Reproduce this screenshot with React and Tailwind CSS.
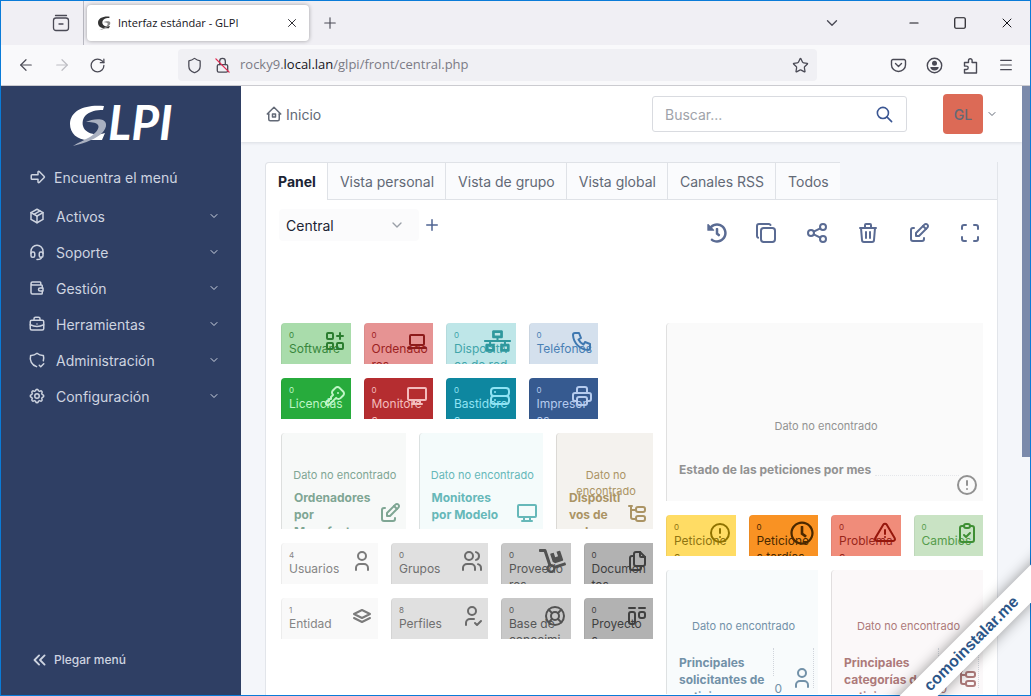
import React, { useState } from "react";
import clsx from "clsx";
import { ArrowLeft, ArrowRight, ChevronDown, Menu, Minus, Plus, RotateCw, Shield, Square, Star, X } from "lucide-react";
import {
  TbAlertCircle,
  TbAlertTriangle,
  TbApps,
  TbArrowBigRight,
  TbBriefcase,
  TbChevronDown,
  TbChevronsLeft,
  TbClipboardCheck,
  TbCopy,
  TbDeviceDesktop,
  TbDeviceLaptop,
  TbEdit,
  TbFiles,
  TbHeadset,
  TbHome2,
  TbKey,
  TbLayoutKanban,
  TbLifebuoy,
  TbMaximize,
  TbPackage,
  TbPhone,
  TbPlus,
  TbPrinter,
  TbSearch,
  TbServer,
  TbSettings,
  TbShare,
  TbShieldCheck,
  TbStack,
  TbTrash,
  TbUser,
  TbUserCheck,
  TbUsers,
  TbWallet,
} from "react-icons/tb";
import { FaDolly, FaHistory, FaNetworkWired, FaRegClock } from "react-icons/fa";

const TreeIcon = ({ className }) => (
  <svg viewBox="0 0 24 24" className={className} fill="none" stroke="currentColor" strokeWidth="2" strokeLinecap="round" strokeLinejoin="round">
    <path d="M4 5h3M6 5v11a2 2 0 0 0 2 2h3M6 9h5" />
    <rect x="11" y="6" width="9" height="5" rx="2" />
    <rect x="11" y="15" width="9" height="5" rx="2" />
  </svg>
);

const Swoosh = ({ dark }) => (
  <>
    <path
      d="M35 2C17 0 1 6 1 20c0 9 7 16 18 16h14l3-7c-8 3-20 1-22-7C12 12 20 6 34 6z"
      fill={dark ? "#333" : "#fff"}
    />
    <path
      d="M17 18c6-3 19-5 20 2 1 6-7 13-15 16-6 3-12 4-18 6 6-4 12-6 17-9 6-4 10-9 8-12-2-3-8-3-12-3z"
      fill={dark ? "#888" : "#a9b0c0"}
    />
  </>
);

const Logo = () => (
  <svg viewBox="0 0 104 44" className="h-11 w-[104px] overflow-visible" role="img" aria-label="GLPI">
    <Swoosh />
    <text x="39" y="36" fontFamily="Lato" fontSize="48" fontWeight="700" fontStyle="italic" fill="#fff">
      LPI
    </text>
  </svg>
);

const menu = [
  { label: "Activos", icon: TbPackage },
  { label: "Soporte", icon: TbHeadset },
  { label: "Gestión", icon: TbWallet },
  { label: "Herramientas", icon: TbBriefcase },
  { label: "Administración", icon: TbShieldCheck },
  { label: "Configuración", icon: TbSettings },
];

const tabs = ["Panel", "Vista personal", "Vista de grupo", "Vista global", "Canales RSS", "Todos"];

const actions = [
  { label: "Historial", icon: FaHistory, size: "size-5" },
  { label: "Clonar", icon: TbCopy, size: "size-6" },
  { label: "Compartir", icon: TbShare, size: "size-6" },
  { label: "Eliminar", icon: TbTrash, size: "size-6" },
  { label: "Editar", icon: TbEdit, size: "size-6" },
  { label: "Pantalla completa", icon: TbMaximize, size: "size-6" },
];

const counters = [
  { label: "Software", n: 0, icon: TbApps, at: "col-start-1 col-span-3 row-start-1", color: "bg-[#a9dcab] text-[#38873c]", iconColor: "text-[#2b7d30]" },
  { label: "Ordenado\nres", n: 0, icon: TbDeviceLaptop, at: "col-start-4 col-span-3 row-start-1", color: "bg-[#e69393] text-[#9c2222]", iconColor: "text-[#8c1a1a]" },
  { label: "Dispositiv\nos de red", n: 0, icon: FaNetworkWired, wide: true, at: "col-start-7 col-span-3 row-start-1", color: "bg-[#bee6e8] text-[#41a5aa]", iconColor: "text-[#2f989d]" },
  { label: "Teléfonos", n: 0, icon: TbPhone, at: "col-start-10 col-span-3 row-start-1", color: "bg-[#d4e0ed] text-[#4a80b5]", iconColor: "text-[#3f78b0]" },
  { label: "Licencias", n: 0, icon: TbKey, at: "col-start-1 col-span-3 row-start-3", color: "bg-[#27ab3c] text-[#bff5c6]", iconColor: "text-[#bff5c6]" },
  { label: "Monitore\ns", n: 0, icon: TbDeviceDesktop, at: "col-start-4 col-span-3 row-start-3", color: "bg-[#b52d30] text-[#f3bcbd]", iconColor: "text-[#f3bcbd]" },
  { label: "Bastidore\ns", n: 0, icon: TbServer, at: "col-start-7 col-span-3 row-start-3", color: "bg-[#0e87a0] text-[#8fe3f4]", iconColor: "text-[#8fe3f4]" },
  { label: "Impresor\nas", n: 0, icon: TbPrinter, at: "col-start-10 col-span-3 row-start-3", color: "bg-[#365a90] text-[#b5cbee]", iconColor: "text-[#b5cbee]" },
  { label: "Usuarios", n: 4, icon: TbUser, at: "col-start-1 col-span-4 row-start-9", color: "bg-[#f9f9f9] text-[#858585]", iconColor: "text-[#7b7b7b]" },
  { label: "Grupos", n: 0, icon: TbUsers, at: "col-start-5 col-span-4 row-start-9", color: "bg-[#e0e0e0] text-[#6f6f6f]", iconColor: "text-[#6b6b6b]" },
  { label: "Proveedo\nres", n: 0, icon: FaDolly, wide: true, at: "col-start-9 col-span-3 row-start-9", color: "bg-[#c8c8c8] text-[#565656]", iconColor: "text-[#525252]" },
  { label: "Documen\ntos", n: 0, icon: TbFiles, at: "col-start-12 col-span-3 row-start-9", color: "bg-[#b2b2b2] text-[#404040]", iconColor: "text-[#404040]" },
  { label: "Entidad", n: 1, icon: TbStack, at: "col-start-1 col-span-4 row-start-11", color: "bg-[#f9f9f9] text-[#858585]", iconColor: "text-[#7b7b7b]" },
  { label: "Perfiles", n: 8, icon: TbUserCheck, at: "col-start-5 col-span-4 row-start-11", color: "bg-[#e0e0e0] text-[#6f6f6f]", iconColor: "text-[#6b6b6b]" },
  { label: "Base de\nconocimi\nento", n: 0, icon: TbLifebuoy, at: "col-start-9 col-span-3 row-start-11", color: "bg-[#c8c8c8] text-[#565656]", iconColor: "text-[#525252]" },
  { label: "Proyecto\ns", n: 0, icon: TbLayoutKanban, at: "col-start-12 col-span-3 row-start-11", color: "bg-[#b2b2b2] text-[#404040]", iconColor: "text-[#404040]" },
  { label: "Peticione\ns", n: 0, icon: TbAlertCircle, at: "col-start-15 col-span-3 row-start-8", color: "bg-[#ffdc64] text-[#8f7411]", iconColor: "text-[#8f7200]" },
  { label: "Peticione\ns tardías", n: 0, icon: FaRegClock, at: "col-start-18 col-span-3 row-start-8", color: "bg-[#f99223] text-[#4a2800]", iconColor: "text-[#4a2800]" },
  { label: "Problema\ns", n: 0, icon: TbAlertTriangle, at: "col-start-21 col-span-3 row-start-8", color: "bg-[#f08c7a] text-[#99261a]", iconColor: "text-[#96170c]" },
  { label: "Cambios", n: 0, icon: TbClipboardCheck, at: "col-start-24 col-span-3 row-start-8", color: "bg-[#c9e3c4] text-[#559c4b]", iconColor: "text-[#3f8f34]" },
];

const small = { message: "top-[34px] px-2", pad: "pt-[56px]" };
const medium = { message: "top-[48px]", pad: "pt-[84px]", axis: true };

const charts = [
  { title: "Ordenadores\npor\nManufact", icon: TbEdit, at: "col-start-1 col-span-5 row-start-5 row-span-4", color: "bg-[#f7f9f8] text-[#7fa694]", ...small },
  { title: "Monitores\npor Modelo", icon: TbDeviceDesktop, at: "col-start-6 col-span-5 row-start-5 row-span-4", color: "bg-[#f4fbfb] text-[#66b8b9]", ...small },
  { title: "Dispositi\nvos de\nred", icon: TreeIcon, at: "col-start-11 col-span-4 row-start-5 row-span-4", color: "bg-[#f4f2ee] text-[#ab9464]", ...small },
  {
    title: "Estado de las peticiones por mes",
    icon: TbAlertCircle,
    at: "col-start-15 col-span-12 row-start-1 row-span-7",
    color: "bg-[#fafafa] text-[#929292]",
    message: "top-[95px]",
    pad: "pt-[138px]",
    line: true,
  },
  { title: "Principales\nsolicitantes de\npeticiones", icon: TbUser, at: "col-start-15 col-span-6 row-start-10 row-span-5", color: "bg-[#f8fbfc] text-[#7291a8]", ...medium },
  { title: "Principales\ncategorías de\npeticiones", icon: TreeIcon, at: "col-start-21 col-span-6 row-start-10 row-span-5", color: "bg-[#fbf8f9] text-[#ad7a7a]", ...medium },
];

const Counter = ({ label, n, icon: Icon, wide, at, color, iconColor }) => (
  <a
    href="#"
    className={clsx("relative row-span-2 mr-[13px] mb-[14px] overflow-hidden rounded-tl border-l border-black/5 pt-2 pl-[7px]", at, color)}
  >
    <span className="block text-[8px] leading-2">{n}</span>
    <span className="mt-0.5 block text-[12px] leading-4 whitespace-pre">{label}</span>
    <Icon className={clsx("absolute top-1.5", iconColor, wide ? "right-[5px] h-6 w-[27px]" : "right-1 size-6")} />
  </a>
);

const Chart = ({ title, pad, icon: Icon, at, color, message, axis, line }) => (
  <section className={clsx("relative mr-[13px] mb-[14px] overflow-hidden rounded-tl border-l border-black/10 pl-3", at, color)}>
    <p className={clsx("absolute right-0 left-0.5 text-center text-[11px] leading-4", message)}>Dato no encontrado</p>
    <h3 className={clsx("flex text-[12px] leading-[17px] font-bold whitespace-pre", pad)}>
      {title}
      {line && <span className="mr-6 mb-0.5 ml-1 grow border-b border-dotted border-gray-200" />}
    </h3>
    {axis && (
      <>
        <span className="absolute top-[78px] right-11 h-7 border-l border-dotted border-gray-300" />
        <span className="absolute top-[78px] right-1 h-10 border-l border-dotted border-gray-300" />
        <span className="absolute top-[111px] right-9 text-[12px] leading-4">0</span>
      </>
    )}
    <Icon className="absolute right-1 bottom-1 size-6" />
  </section>
);

const Browser = () => (
  <div className="shrink-0 font-['Open_Sans',sans-serif] text-[#4a4a55]">
    <div className="flex h-11 items-center bg-[#f0eff4]">
      <div className="flex h-full w-[83px] items-center justify-end border-r border-[#b9b9c2] pr-[13px]">
        <button aria-label="Firefox View">
          <svg viewBox="0 0 18 18" className="size-[18px]" fill="none" stroke="currentColor" strokeWidth="1.3" strokeLinecap="round">
            <path d="M3.5 1.5h11M7 10h4" />
            <rect x="1.5" y="4" width="15" height="12.5" rx="2.5" />
          </svg>
        </button>
      </div>
      <div className="ml-[3px] flex h-9 w-[222px] items-center rounded bg-white px-2.5 text-[11px] text-[#15141a] shadow-[0_0_4px_rgba(0,0,0,0.35)]">
        <svg viewBox="0 0 40 44" className="mr-1.5 size-[15px]">
          <Swoosh dark />
        </svg>
        <span>Interfaz estándar - GLPI</span>
        <button aria-label="Cerrar pestaña" className="ml-auto">
          <X className="size-3.5" strokeWidth={1.5} />
        </button>
      </div>
      <button aria-label="Nueva pestaña" className="ml-3">
        <Plus className="size-[18px]" strokeWidth={1.5} />
      </button>
      <div className="ml-auto flex items-center text-[#15141a]">
        <button aria-label="Listar pestañas" className="mr-[66px]">
          <ChevronDown className="size-[18px] text-[#4a4a55]" strokeWidth={1.8} />
        </button>
        <button aria-label="Minimizar" className="mr-8">
          <Minus className="size-3.5" strokeWidth={1.8} />
        </button>
        <button aria-label="Maximizar" className="mr-8">
          <Square className="size-3.5" strokeWidth={2} strokeLinejoin="miter" />
        </button>
        <button aria-label="Cerrar" className="mr-[15px]">
          <X className="size-4" strokeWidth={1.5} />
        </button>
      </div>
    </div>
    <div className="flex h-[41px] items-center border-b border-[#cbcbd0] bg-[#f9f9fb] px-4">
      <button aria-label="Atrás">
        <ArrowLeft className="size-[18px]" strokeWidth={1.6} />
      </button>
      <button aria-label="Adelante" className="ml-[18px] text-[#bdbdc3]">
        <ArrowRight className="size-[18px]" strokeWidth={1.6} />
      </button>
      <button aria-label="Recargar" className="ml-[18px]">
        <RotateCw className="size-[17px]" strokeWidth={1.8} />
      </button>
      <div className="ml-[72px] flex h-8 w-[639px] items-center rounded bg-[#f0f0f4] px-2">
        <Shield className="size-[17px]" strokeWidth={1.8} />
        <svg viewBox="0 0 18 18" className="ml-[11px] size-[17px]" fill="none" stroke="currentColor" strokeWidth="1.4" strokeLinecap="round">
          <rect x="3.5" y="8" width="11" height="8" rx="1.5" />
          <path d="M6 8V4.5a3 3 0 0 1 6 0V8" />
          <path d="M2 2l14 14" stroke="#e22850" />
        </svg>
        <span className="ml-[9px] text-[13px] text-[#7b7b85]">
          rocky9.<span className="text-[#15141a]">local.lan</span>/glpi/front/central.php
        </span>
        <button aria-label="Marcador" className="ml-auto">
          <Star className="size-[17px]" strokeWidth={1.8} />
        </button>
      </div>
      <div className="ml-auto flex items-center gap-[19px]">
        <button aria-label="Pocket">
          <svg viewBox="0 0 17 17" className="size-[17px]" fill="none" stroke="currentColor" strokeWidth="1.4" strokeLinecap="round" strokeLinejoin="round">
            <path d="M3 2.5h11a1.5 1.5 0 0 1 1.5 1.5v4a7 6.5 0 0 1-14 0V4A1.5 1.5 0 0 1 3 2.5z" />
            <path d="M5.5 6.5l3 3 3-3" />
          </svg>
        </button>
        <button aria-label="Cuenta">
          <svg viewBox="0 0 17 17" className="size-[17px]">
            <circle cx="8.5" cy="8.5" r="7.2" fill="none" stroke="currentColor" strokeWidth="1.4" />
            <circle cx="8.5" cy="6.3" r="2.5" fill="currentColor" />
            <path d="M4.3 10h8.4c0 2-1.8 3.5-4.2 3.5S4.3 12 4.3 10z" fill="currentColor" />
          </svg>
        </button>
        <button aria-label="Extensiones">
          <svg viewBox="0 0 17 17" className="size-[17px]" fill="none" stroke="currentColor" strokeWidth="1.4" strokeLinejoin="round">
            <path d="M2.5 5.5h4v-2a1.8 1.8 0 0 1 3.6 0v2h4.4V16h-12v-3.500h2a1.7 1.7 0 0 0 0-3.4h-2z" />
          </svg>
        </button>
        <button aria-label="Menú">
          <Menu className="size-4" strokeWidth={1.8} />
        </button>
      </div>
    </div>
  </div>
);

const Sidebar = () => (
  <aside className="flex w-60 shrink-0 flex-col bg-[#2f3f64] text-[#ced4e0]">
    <div className="flex justify-center pt-[18px]">
      <Logo />
    </div>
    <button className="mt-[11px] flex h-9 items-center pl-7 text-[14px]">
      <TbArrowBigRight className="mr-[7px] size-[18px]" />
      Encuentra el menú
    </button>
    <nav className="mt-[3px]">
      {menu.map(({ label, icon: Icon }) => (
        <a key={label} href="#" className="flex h-9 items-center pr-[21px] pl-[27px] text-[14px]">
          <Icon className="mr-2.5 size-[18px]" />
          {label}
          <TbChevronDown className="ml-auto size-3" />
        </a>
      ))}
    </nav>
    <button className="mt-auto mb-[23px] flex h-6 items-center pl-7 text-[12px] font-medium">
      <TbChevronsLeft className="mr-[3px] size-[22px]" />
      Plegar menú
    </button>
  </aside>
);

const App = () => {
  const [activeTab, setActiveTab] = useState("Panel");

  return (
    <div className="relative h-screen overflow-hidden">
      <div className="flex h-full flex-col border border-[#0a7bd8] font-['Inter',sans-serif]">
        <Browser />
        <div className="flex min-h-0 grow">
          <Sidebar />
          <div className="flex min-w-0 grow flex-col overflow-hidden bg-[#f4f6fa]">
            <header className="flex h-14 shrink-0 items-center bg-white px-6 shadow-[0_1px_3px_rgba(30,41,59,0.12)]">
              <a href="#" className="flex items-center gap-[3px] text-[14px] text-[#626976]">
                <TbHome2 className="size-[18px]" />
                Inicio
              </a>
              <form className="ml-auto flex h-9 w-[255px] items-center rounded-[3px] border border-[#d9dbe0] px-3">
                <input
                  type="text"
                  aria-label="Buscar"
                  placeholder="Buscar..."
                  className="min-w-0 grow bg-transparent text-[14px] outline-none placeholder:text-[#a0a3aa]"
                />
                <button type="button" aria-label="Buscar">
                  <TbSearch className="size-[19px] text-[#3a5693]" />
                </button>
              </form>
              <button className="ml-9 flex items-center gap-[3px] text-[#626976]">
                <span className="flex size-10 items-center justify-center rounded bg-[#dc6a56] text-[14px] font-medium">GL</span>
                <TbChevronDown className="size-3" />
              </button>
            </header>

            <main className="mx-6 mt-5 flex min-h-0 grow flex-col">
              <div role="tablist" className="flex h-[38px] shrink-0 border-r border-[#e2e5ea] text-[14px] text-[#626976]">
                {tabs.map((tab) => (
                  <button
                    key={tab}
                    role="tab"
                    aria-selected={tab === activeTab}
                    onClick={() => setActiveTab(tab)}
                    className={clsx(
                      "border-t border-[#dfe2e7] pr-[11px] pl-3",
                      tab !== "Todos" && "border-r",
                      tab === activeTab ? "rounded-tl border-l bg-white font-bold text-[#1b2434]" : "border-b bg-[#fafbfd]"
                    )}
                  >
                    {tab}
                  </button>
                ))}
                <span className="grow border-b border-[#dfe2e7]" />
              </div>

              <div className="grow overflow-hidden border-x border-[#e2e5ea] bg-white">
                <div className="flex items-start pt-[9px] pr-[15px] pl-[13px]">
                  <div className="relative w-[140px]">
                    <select
                      aria-label="Panel de control"
                      className="h-8 w-full appearance-none rounded-sm bg-[#fbfbfc] pl-[7px] text-[14px] text-[#1b2434]"
                    >
                      <option>Central</option>
                    </select>
                    <ChevronDown className="pointer-events-none absolute top-2 right-3.5 size-4 text-[#9a9fa8]" strokeWidth={2} />
                  </div>
                  <button aria-label="Añadir panel" className="mt-[7px] ml-1 text-[#4f6492]">
                    <TbPlus className="size-[18px]" />
                  </button>
                  <div className="mt-3 ml-auto flex items-center gap-[27px] text-[#5a6b93]">
                    {actions.map(({ label, icon: Icon, size }) => (
                      <button key={label} aria-label={label}>
                        <Icon className={size} />
                      </button>
                    ))}
                  </div>
                </div>

                <div className="mt-[78px] grid auto-rows-[27px_28px] grid-cols-26 pr-px pl-[15px]">
                  {counters.map((c, i) => (
                    <Counter key={i} {...c} />
                  ))}
                  {charts.map((c) => (
                    <Chart key={c.title} {...c} />
                  ))}
                </div>
              </div>
            </main>
          </div>
          <div className="w-2 shrink-0 bg-[#f4f6fa]">
            <div className="h-[61%] bg-[#7b8aab]" />
          </div>
        </div>
      </div>

      <div className="absolute right-[-90px] bottom-[39px] flex h-[27px] w-[300px] -rotate-45 items-center justify-center bg-white font-['Liberation_Sans',sans-serif] text-[16px] font-bold text-[#2c5688] shadow-[0_0_14px_rgba(0,0,0,0.4)]">
        comoinstalar.me
      </div>
    </div>
  );
};

export default App;
